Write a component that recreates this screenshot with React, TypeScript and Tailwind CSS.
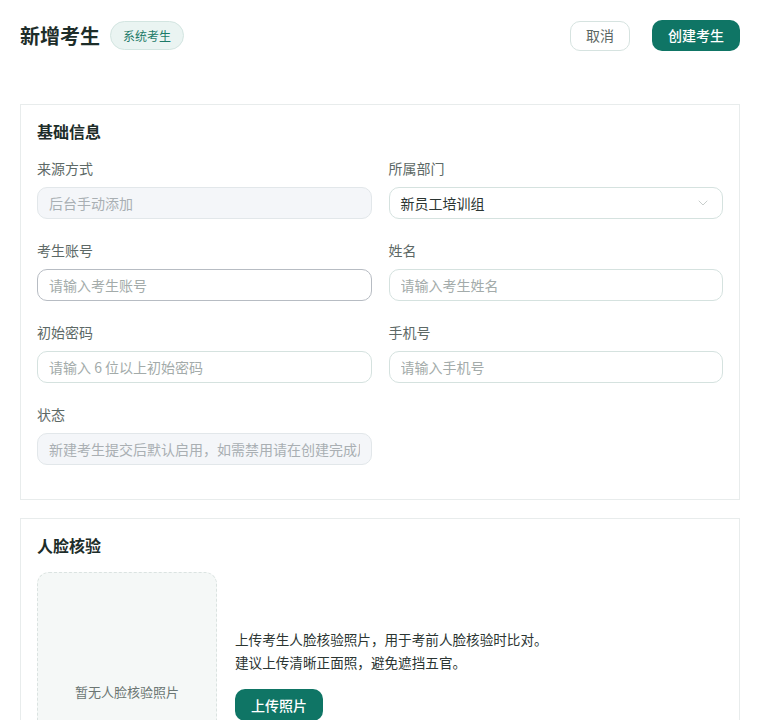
import { ChevronDown } from "lucide-react";

const font = { fontFamily: '"Noto Sans CJK SC", "Noto Sans", sans-serif' };

function Field({ label, children }: { label: string; children: React.ReactNode }) {
    return (
        <div className="flex flex-col gap-[9px]">
            <span className="text-[14px] leading-5 text-[#5d6966]">{label}</span>
            {children}
        </div>
    );
}

function TextInput({ placeholder, strong }: { placeholder: string; strong?: boolean }) {
    return (
        <input
            placeholder={placeholder}
            className={
                "h-8 w-full rounded-[10px] border bg-white px-[11px] text-[14px] text-[#2b3532] placeholder:text-[#a3abaa] outline-none " +
                (strong ? "border-[#b7bcc3]" : "border-[#d5e2df]")
            }
        />
    );
}

function Readonly({ text }: { text: string }) {
    return (
        <input
            disabled
            placeholder={text}
            className="h-8 w-full rounded-[10px] border border-[#e2e7ea] bg-[#f4f6f9] px-[11px] text-[14px] placeholder:text-[#a9afb3] outline-none"
        />
    );
}

export default function App() {
    return (
        <div className="min-h-[720px] bg-white px-5 pt-5" style={font}>
            <header className="flex flex-row items-center justify-between">
                <div className="flex flex-row items-center gap-[10px]">
                    <h1 className="text-[20px] font-bold leading-[30px] text-[#1d2d29]">新增考生</h1>
                    <span className="rounded-full border border-[#d3e5e1] bg-[#eaf4f2] px-3 text-[12px] leading-[27px] text-[#1d7a68]">
                        系统考生
                    </span>
                </div>
                <div className="flex flex-row items-center gap-[22px]">
                    <button className="h-[30px] w-[60px] rounded-[10px] border border-[#d6e3e0] bg-white text-[14px] text-[#5b6763]">
                        取消
                    </button>
                    <button className="h-[31px] w-[88px] rounded-[10px] bg-[#0f7565] text-[14px] font-medium text-white">
                        创建考生
                    </button>
                </div>
            </header>

            <section className="mt-[53px] border border-[#e8ecec] px-4 pb-[34px] pt-4">
                <h2 className="text-[16px] font-bold leading-5 text-[#1d2d29]">基础信息</h2>
                <div className="mt-[17px] grid grid-cols-2 gap-x-[17px] gap-y-[21px]">
                    <Field label="来源方式">
                        <Readonly text="后台手动添加" />
                    </Field>
                    <Field label="所属部门">
                        <div className="flex h-8 w-full flex-row items-center justify-between rounded-[10px] border border-[#d5e2df] bg-white px-[11px] text-[14px] text-[#2b3532]">
                            <span>新员工培训组</span>
                            <ChevronDown size={16} strokeWidth={1.1} className="text-[#b3bcb9]" />
                        </div>
                    </Field>
                    <Field label="考生账号">
                        <TextInput placeholder="请输入考生账号" strong />
                    </Field>
                    <Field label="姓名">
                        <TextInput placeholder="请输入考生姓名" />
                    </Field>
                    <Field label="初始密码">
                        <TextInput placeholder="请输入 6 位以上初始密码" />
                    </Field>
                    <Field label="手机号">
                        <TextInput placeholder="请输入手机号" />
                    </Field>
                    <Field label="状态">
                        <Readonly text="新建考生提交后默认启用，如需禁用请在创建完成后到列表中操作" />
                    </Field>
                </div>
            </section>

            <section className="mt-[18px] border border-[#e8ecec] px-4 pb-6 pt-4">
                <h2 className="text-[16px] font-bold leading-5 text-[#1d2d29]">人脸核验</h2>
                <div className="mt-[17px] flex flex-row items-start gap-[18px]">
                    <div className="flex h-[240px] w-[180px] shrink-0 items-center justify-center rounded-[12px] border border-dashed border-[#dbe3e1] bg-[#f5f8f7] text-[13px] text-[#6b7673]">
                        暂无人脸核验照片
                    </div>
                    <div className="mt-[56px] flex flex-col">
                        <p className="text-[13.6px] leading-[23px] text-[#2b3532]">
                            上传考生人脸核验照片，用于考前人脸核验时比对。
                            <br />
                            建议上传清晰正面照，避免遮挡五官。
                        </p>
                        <button className="mt-[15px] h-8 w-[88px] rounded-[10px] bg-[#0f7565] text-[14px] font-medium text-white">
                            上传照片
                        </button>
                    </div>
                </div>
            </section>
        </div>
    );
}
